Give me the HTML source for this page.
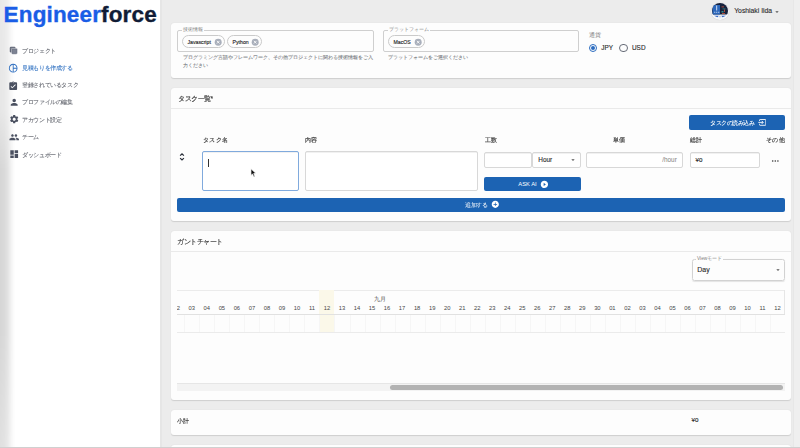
<!DOCTYPE html>
<html><head><meta charset="utf-8">
<style>
*{box-sizing:border-box;margin:0;padding:0}
html,body{width:800px;height:448px;overflow:hidden}
body{position:relative;background:#ececec;font-family:"Liberation Sans",sans-serif;color:#333}
.a{position:absolute}
.t{position:absolute;white-space:nowrap;line-height:1}
#side{left:0;top:0;width:160px;height:448px;background:#fff}
#shade{left:0;top:0;width:18px;height:448px;background:linear-gradient(to right,rgba(0,0,0,.16) 0,rgba(0,0,0,.145) 4.5px,rgba(0,0,0,.11) 8px,rgba(0,0,0,.05) 11px,rgba(0,0,0,.016) 13.5px,rgba(0,0,0,0) 15.5px);-webkit-mask-image:linear-gradient(to bottom,rgba(0,0,0,.55) 0,rgba(0,0,0,.6) 110px,#000 170px,#000 330px,rgba(0,0,0,.75) 448px)}
#sideline{left:160px;top:0;width:1.6px;height:448px;background:#e6e6e6}
.logo{left:3.6px;top:3.5px;font-size:22.5px;font-weight:bold;letter-spacing:0.15px;-webkit-text-stroke:0.35px currentColor}
.mi{position:absolute;left:0;width:160px;height:17px}
.mi svg{position:absolute;left:8.7px;top:3.4px;width:10.4px;height:10.4px;fill:#4a5060}
.mi span{position:absolute;left:22px;top:5.7px;font-size:6px;transform:scale(0.94);transform-origin:0 0;color:#6a6d75;-webkit-text-stroke:0.1px #6a6d75;white-space:nowrap;line-height:1}
.card{position:absolute;left:171px;width:620px;background:#fdfdfd;border-radius:3px;box-shadow:0 0.5px 1.1px rgba(0,0,0,.13)}
.fld{position:absolute;border:1px solid #cfcfcf;border-radius:2px}
.lbl{position:absolute;font-size:4.5px;color:#7e7e7e;background:#fdfdfd;padding:0 1px;line-height:1;white-space:nowrap}
.chip{position:absolute;height:13px;border:0.8px solid #cacaca;border-radius:7px;font-size:5px;color:#333;line-height:11.5px}
.help{position:absolute;font-size:5px;color:#777a80;-webkit-text-stroke:0.08px #777a80;line-height:8px;white-space:nowrap}
.inp{position:absolute;border:0.8px solid #d8d8d8;box-shadow:inset 0 0.4px 0 #e4e4e4;border-radius:2px;background:#fff}
.btn{position:absolute;background:#1c63b3;border-radius:2px;color:#fff}
.hdr{position:absolute;font-size:7px;transform:scale(0.92);transform-origin:0 0;-webkit-text-stroke:0.2px #474747;color:#474747;white-space:nowrap;line-height:1}
.day{position:absolute;top:305px;width:15.05px;text-align:center;font-size:5.8px;color:#474747;line-height:1}
</style></head><body>
<div id="side" class="a"></div><div id="shade" class="a"></div>
<div id="sideline" class="a"></div>
<div class="a" style="left:793px;top:0;width:7px;height:448px;background:#efefef;border-left:0.6px solid #e7e7e7"></div>
<div class="t logo"><span style="color:#1a5de6;-webkit-text-stroke:0.35px #1a5de6">Engineer</span><span style="color:#111c36;-webkit-text-stroke:0.35px #111c36">force</span></div>

<!-- menu -->
<div class="mi" style="top:41.9px"><svg viewBox="0 0 10 10" style="left:9px;top:4.4px;width:9.6px;height:9.6px"><rect x="0.8" y="0.9" width="6" height="6" rx="1.2" fill="#5e6474"/><rect x="1.6" y="1.7" width="1" height="1" fill="#9aa0ad"/><rect x="2.5" y="2.4" width="6.3" height="6.2" rx="1.2" fill="#6f7585" stroke="#f4f4f6" stroke-width="0.5"/><rect x="3.6" y="3.6" width="4" height="3.8" rx="0.4" fill="#7d8393"/></svg><span>プロジェクト</span></div>
<div class="mi" style="top:59.4px"><svg viewBox="0 0 24 24" style="fill:#2f6fc0;left:8.1px"><path d="M12 2C6.480 2 2 6.48 2 12s4.48 10 10 10 10-4.48 10-10S17.52 2 12 2zm1 2.07c3.61.45 6.48 3.33 6.93 6.93H13V4.070zM4 12c0-4.06 3.07-7.44 7-7.93v15.87c-3.93-.5-7-3.88-7-7.94zm9 7.93V13h6.93c-.45 3.61-3.32 6.48-6.93 6.93z"/></svg><span style="color:#3a78c4;-webkit-text-stroke:0.1px #3a78c4">見積もりを作成する</span></div>
<div class="mi" style="top:76.7px"><svg viewBox="0 0 24 24" style="left:8.2px;top:4.2px"><path d="M19 3h-4.18C14.4 1.84 13.3 1 12 1c-1.3 0-2.4.84-2.82 2H5c-1.1 0-2 .9-2 2v14c0 1.1.9 2 2 2h14c1.1 0 2-.9 2-2V5c0-1.1-.9-2-2-2zm-7 0c.55 0 1 .45 1 1s-.45 1-1 1-1-.45-1-1 .45-1 1-1zm-2 14l-4-4 1.41-1.41L10 14.17l6.59-6.590L18 9l-8 8z"/></svg><span>登録されているタスク</span></div>
<div class="mi" style="top:93.8px"><svg viewBox="0 0 24 24"><path d="M12 12c2.21 0 4-1.79 4-4s-1.79-4-4-4-4 1.79-4 4 1.79 4 4 4zm0 2c-2.67 0-8 1.34-8 4v2h16v-2c0-2.66-5.33-4-8-4z"/></svg><span>プロファイルの編集</span></div>
<div class="mi" style="top:111.1px"><svg viewBox="0 0 24 24"><path d="M19.14 12.94c.04-.3.06-.61.06-.94 0-.32-.02-.64-.07-.94l2.030-1.58c.18-.14.23-.41.12-.61l-1.92-3.32c-.12-.22-.37-.29-.59-.22l-2.39.96c-.5-.38-1.03-.7-1.62-.94l-.36-2.54c-.04-.24-.24-.41-.48-.41h-3.84c-.24 0-.43.17-.47.41l-.36 2.54c-.59.24-1.13.57-1.62.94l-2.39-.96c-.22-.08-.47 0-.59.22L2.74 8.87c-.12.21-.08.47.12.61l2.03 1.58c-.05.3-.09.63-.09.94s.02.64.07.94l-2.03 1.58c-.18.14-.23.41-.12.61l1.92 3.32c.12.22.37.29.59.22l2.39-.96c.5.38 1.03.7 1.62.94l.36 2.54c.05.24.24.41.48.41h3.84c.24 0 .44-.17.47-.41l.36-2.54c.59-.24 1.13-.56 1.62-.94l2.39.96c.22.08.47 0 .59-.22l1.92-3.32c.12-.22.07-.47-.12-.61l-2.01-1.58zM12 15.6c-1.98 0-3.6-1.62-3.6-3.6s1.62-3.6 3.6-3.6 3.6 1.62 3.6 3.6-1.62 3.6-3.6 3.6z"/></svg><span>アカウント設定</span></div>
<div class="mi" style="top:128.5px"><svg viewBox="0 0 24 24"><path d="M16 11c1.66 0 2.99-1.34 2.99-3S17.66 5 16 5c-1.66 0-3 1.34-3 3s1.34 3 3 3zm-8 0c1.66 0 2.99-1.34 2.99-3S9.66 5 8 5C6.34 5 5 6.34 5 8s1.34 3 3 3zm0 2c-2.33 0-7 1.17-7 3.5V19h14v-2.5c0-2.33-4.67-3.5-7-3.5zm8 0c-.29 0-.62.02-.97.05 1.16.84 1.97 1.97 1.97 3.45V19h6v-2.5c0-2.33-4.67-3.5-7-3.5z"/></svg><span>チーム</span></div>
<div class="mi" style="top:145.9px"><svg viewBox="0 0 24 24"><path d="M3 13h8V3H3v10zm0 8h8v-6H3v6zm10 0h8V11h-8v10zm0-18v6h8V3h-8z"/></svg><span>ダッシュボード</span></div>

<!-- top bar user -->
<div class="a" style="left:711.3px;top:2.6px;width:17.6px;height:17.6px;border-radius:50%;background:#f7f8fa;box-shadow:0 0 0.7px rgba(0,0,0,.25)"></div>
<svg class="a" style="left:712.1px;top:3.4px;width:16px;height:16px" viewBox="0 0 32 32">
<defs><clipPath id="av"><circle cx="16" cy="16" r="16"/></clipPath></defs>
<g clip-path="url(#av)">
<rect x="0" y="0" width="32" height="32" fill="#f3f5f9"/>
<rect x="0" y="0" width="32" height="23" fill="#17213b"/>
<rect x="1" y="4" width="15" height="19" fill="#2b66ba"/>
<rect x="8.5" y="5" width="1.8" height="10" fill="#dfe8f6"/>
<rect x="4.5" y="17.5" width="2" height="2" fill="#dfe8f6"/>
<rect x="8.5" y="17.5" width="2" height="2" fill="#dfe8f6"/>
<rect x="12.5" y="17.5" width="2" height="2" fill="#dfe8f6"/>
<rect x="19" y="7" width="5" height="1.6" fill="#d0573c"/>
<rect x="21" y="11" width="6" height="1.6" fill="#2f8a8c"/>
<rect x="24" y="13" width="1.6" height="5" fill="#d0573c"/>
<rect x="19" y="16" width="4" height="3" fill="#2f8a8c"/>
<rect x="20" y="20" width="6" height="1.6" fill="#d0573c"/>
<path d="M4 25.5H13.5L11 28.5Z M18.5 25.5H28L21 28.5Z" fill="#2a62c6"/>
<rect x="14" y="25.5" width="4" height="3" fill="#c9d2de"/>
</g></svg>
<div class="t" style="left:734.2px;top:8.2px;font-size:6.8px;color:#2e2e2e;-webkit-text-stroke:0.12px #2e2e2e">Yoshiaki Iida</div>
<svg class="a" style="left:773.2px;top:7.5px;width:8px;height:8px" viewBox="0 0 24 24"><path d="M7 10l5 5 5-5z" fill="#555"/></svg>

<!-- card 1 -->
<div class="card" style="top:22.5px;height:55.5px"></div>
<div class="fld" style="left:177px;top:30px;width:197px;height:22.3px"></div>
<div class="lbl" style="left:182px;top:28.3px">技術情報</div>
<div class="chip" style="left:182px;top:34.8px;width:42.5px"><span class="t" style="left:4.5px;top:3.8px;font-size:5.2px;color:#222;-webkit-text-stroke:0.12px #222">Javascript</span><svg class="a" style="left:30.9px;top:2.1px;width:8.4px;height:8.4px" viewBox="0 0 24 24"><circle cx="12" cy="12" r="10" fill="#a9afbb"/><path d="M8.3 8.3L15.7 15.7M15.7 8.3L8.3 15.7" stroke="#fff" stroke-width="2.4"/></svg></div>
<div class="chip" style="left:227px;top:34.8px;width:35px"><span class="t" style="left:4.5px;top:3.8px;font-size:5.2px;color:#222;-webkit-text-stroke:0.12px #222">Python</span><svg class="a" style="left:23.4px;top:2.1px;width:8.4px;height:8.4px" viewBox="0 0 24 24"><circle cx="12" cy="12" r="10" fill="#a9afbb"/><path d="M8.3 8.3L15.7 15.7M15.7 8.3L8.3 15.7" stroke="#fff" stroke-width="2.4"/></svg></div>
<div class="help" style="left:183px;top:53px">プログラミング言語やフレームワーク、その他プロジェクトに関わる技術情報をご入<br>力ください</div>

<div class="fld" style="left:383px;top:30px;width:196px;height:22.3px"></div>
<div class="lbl" style="left:388px;top:28.3px">プラットフォーム</div>
<div class="chip" style="left:388px;top:34.8px;width:37px"><span class="t" style="left:4.5px;top:3.8px;font-size:5.2px;color:#222;-webkit-text-stroke:0.12px #222">MacOS</span><svg class="a" style="left:25.4px;top:2.1px;width:8.4px;height:8.4px" viewBox="0 0 24 24"><circle cx="12" cy="12" r="10" fill="#a9afbb"/><path d="M8.3 8.3L15.7 15.7M15.7 8.3L8.3 15.7" stroke="#fff" stroke-width="2.4"/></svg></div>
<div class="help" style="left:388.3px;top:53px">プラットフォームをご選択ください</div>

<div class="t" style="left:588.5px;top:32px;font-size:6px;color:#888">通貨</div>
<div class="a" style="left:588.5px;top:43.5px;width:8.5px;height:8.5px;border-radius:50%;border:1px solid #2b6cc0"></div>
<div class="a" style="left:590.75px;top:45.75px;width:4px;height:4px;border-radius:50%;background:#2b6cc0"></div>
<div class="t" style="left:601.2px;top:44.5px;font-size:6.4px;color:#2a2a2a;-webkit-text-stroke:0.12px #2a2a2a">JPY</div>
<div class="a" style="left:619px;top:43.5px;width:8.5px;height:8.5px;border-radius:50%;border:0.9px solid #676c78"></div>
<div class="t" style="left:632px;top:44.5px;font-size:6.4px;color:#2a2a2a;-webkit-text-stroke:0.12px #2a2a2a">USD</div>

<!-- card 2 -->
<div class="card" style="top:88px;height:133px"></div>
<div class="t" style="left:177.5px;top:94.5px;font-size:7px;transform:scale(0.93);transform-origin:0 0;color:#3a3a3a;-webkit-text-stroke:0.15px #3a3a3a">タスク一覧*</div>
<div class="a" style="left:171px;top:108px;width:620px;height:1px;background:#eaeaea"></div>
<div class="btn" style="left:689.3px;top:115.3px;width:95.7px;height:14.5px"><span class="t" style="left:20.3px;top:4.4px;font-size:6px;transform:scale(0.93);transform-origin:0 0;color:#fff;-webkit-text-stroke:0.1px #fff">タスクの読み込み</span><svg class="a" style="left:68.8px;top:4px;width:8.4px;height:6.8px" viewBox="0 0 17 14"><path d="M3 4.2V2.2Q3 1 4.2 1H15Q16 1 16 2.2V11.8Q16 13 15 13H4.2Q3 13 3 11.8V9.8" fill="none" stroke="#fff" stroke-width="1.8"/><path d="M0.5 7H10.5M7.5 3.8L10.7 7L7.5 10.2" fill="none" stroke="#fff" stroke-width="1.8"/></svg></div>

<div class="hdr" style="left:203px;top:136.1px">タスク名</div>
<div class="hdr" style="left:305px;top:136.1px">内容</div>
<div class="hdr" style="left:484.5px;top:136.1px">工数</div>
<div class="hdr" style="left:612.5px;top:136.1px">単価</div>
<div class="hdr" style="left:689.5px;top:136.1px">総計</div>
<div class="hdr" style="left:766px;top:136.1px">その他</div>

<svg class="a" style="left:177px;top:151.5px;width:10px;height:10px" viewBox="0 0 24 24"><path fill="none" stroke="#2a2f3a" stroke-width="3" d="M7.5 8.8L12 4.6L16.5 8.8M7.5 14.6L12 18.8L16.5 14.6"/></svg>
<div class="inp" style="left:202.3px;top:151.1px;width:96.5px;height:40.2px;border:1px solid #80aadd"></div>
<div class="a" style="left:208.3px;top:159px;width:0.8px;height:7.5px;background:#333"></div>
<svg class="a" style="left:250px;top:168px;width:8.4px;height:10.8px" viewBox="0 0 7 9"><path d="M0.8 0.6 L0.8 6.2 L2.1 5 L3.2 7.5 L4.2 7.1 L3.1 4.6 L5 4.6 Z" fill="#111" stroke="#fff" stroke-width="0.6" stroke-linejoin="round"/></svg>
<div class="inp" style="left:305px;top:151.4px;width:172.5px;height:39.9px"></div>
<div class="inp" style="left:484.3px;top:151.5px;width:47.5px;height:16px"></div>
<div class="inp" style="left:532.3px;top:151.5px;width:48.5px;height:16px"><span class="t" style="left:5px;top:4.7px;font-size:6.4px;color:#2a2a2a;-webkit-text-stroke:0.12px #2a2a2a">Hour</span></div>
<svg class="a" style="left:568.5px;top:155.5px;width:8px;height:8px" viewBox="0 0 24 24"><path d="M7 10l5 5 5-5z" fill="#555"/></svg>
<div class="inp" style="left:586.3px;top:151.5px;width:96.5px;height:16px"><span class="t" style="right:5px;top:4.6px;font-size:6.4px;color:#808080">/hour</span></div>
<div class="inp" style="left:689.5px;top:151.5px;width:70px;height:16px"><span class="t" style="left:5px;top:4.7px;font-size:6.2px;color:#222;-webkit-text-stroke:0.15px #222">¥0</span></div>
<svg class="a" style="left:770px;top:158px;width:10px;height:6px" viewBox="0 0 10 6"><circle cx="2.7" cy="3" r="0.8" fill="#333"/><circle cx="5.3" cy="3" r="0.8" fill="#333"/><circle cx="7.9" cy="3" r="0.8" fill="#333"/></svg>
<div class="btn" style="left:484.3px;top:177.2px;width:96.3px;height:14px"><span class="t" style="left:34px;top:4.8px;font-size:5.8px;color:#fff">ASK AI</span><svg class="a" style="left:55.3px;top:2.8px;width:8.8px;height:8.8px" viewBox="0 0 24 24"><path fill="#fff" d="M12 2C6.48 2 2 6.48 2 12s4.48 10 10 10 10-4.48 10-10S17.52 2 12 2zm-2 14.5v-9l6 4.5-6 4.5z"/></svg></div>
<div class="btn" style="left:177px;top:197.5px;width:608px;height:14.2px"><span class="t" style="left:288px;top:4.2px;font-size:6px;transform:scale(0.92);transform-origin:0 0;color:#fff">追加する</span><svg class="a" style="left:313.7px;top:2.9px;width:8.6px;height:8.6px" viewBox="0 0 24 24"><path fill="#fff" d="M12 2C6.48 2 2 6.48 2 12s4.48 10 10 10 10-4.48 10-10S17.52 2 12 2zm5 11h-4v4h-2v-4H7v-2h4V7h2v4h4v2z"/></svg></div>

<!-- card 3 gantt -->
<div class="card" style="top:230.5px;height:169.5px"></div>
<div class="t" style="left:177.3px;top:238px;font-size:7px;transform:scale(0.93);transform-origin:0 0;color:#3a3a3a;-webkit-text-stroke:0.15px #3a3a3a">ガントチャート</div>
<div class="a" style="left:171px;top:250.5px;width:620px;height:1px;background:#eaeaea"></div>
<div class="a" style="left:692px;top:259px;width:92.5px;height:21.8px;border:0.8px solid #d2d2d2;border-radius:2.5px;box-shadow:0 0.6px 1px rgba(0,0,0,.1)"></div>
<div class="lbl" style="left:696px;top:256.8px;font-size:4.8px">Viewモード</div>
<div class="t" style="left:697.2px;top:266px;font-size:7px;color:#2a2a2a;-webkit-text-stroke:0.12px #2a2a2a">Day</div>
<svg class="a" style="left:773.5px;top:265.7px;width:8px;height:8px" viewBox="0 0 24 24"><path d="M7 10l5 5 5-5z" fill="#555"/></svg>

<!--G--><div id="gantt" class="a" style="left:177px;top:290px;width:608px;height:110px;overflow:hidden">
<div class="a" style="left:0;top:0;width:608px;height:0.8px;background:#ebebeb"></div>
<div class="a" style="left:142.47px;top:0;width:15.02px;height:42.2px;background:#fbf8e9"></div>
<div class="t" style="left:196.5px;top:6.8px;font-size:5.5px;color:#4a4a4a">九月</div>
<div class="day" style="left:-7.73px;top:16.3px">02</div>
<div class="day" style="left:7.29px;top:16.3px">03</div>
<div class="day" style="left:22.31px;top:16.3px">04</div>
<div class="day" style="left:37.33px;top:16.3px">05</div>
<div class="day" style="left:52.35px;top:16.3px">06</div>
<div class="day" style="left:67.37px;top:16.3px">07</div>
<div class="day" style="left:82.39px;top:16.3px">08</div>
<div class="day" style="left:97.41px;top:16.3px">09</div>
<div class="day" style="left:112.43px;top:16.3px">10</div>
<div class="day" style="left:127.45px;top:16.3px">11</div>
<div class="day" style="left:142.47px;top:16.3px">12</div>
<div class="day" style="left:157.49px;top:16.3px">13</div>
<div class="day" style="left:172.51px;top:16.3px">14</div>
<div class="day" style="left:187.53px;top:16.3px">15</div>
<div class="day" style="left:202.55px;top:16.3px">16</div>
<div class="day" style="left:217.57px;top:16.3px">17</div>
<div class="day" style="left:232.59px;top:16.3px">18</div>
<div class="day" style="left:247.61px;top:16.3px">19</div>
<div class="day" style="left:262.63px;top:16.3px">20</div>
<div class="day" style="left:277.65px;top:16.3px">21</div>
<div class="day" style="left:292.67px;top:16.3px">22</div>
<div class="day" style="left:307.69px;top:16.3px">23</div>
<div class="day" style="left:322.71px;top:16.3px">24</div>
<div class="day" style="left:337.73px;top:16.3px">25</div>
<div class="day" style="left:352.75px;top:16.3px">26</div>
<div class="day" style="left:367.77px;top:16.3px">27</div>
<div class="day" style="left:382.79px;top:16.3px">28</div>
<div class="day" style="left:397.81px;top:16.3px">29</div>
<div class="day" style="left:412.83px;top:16.3px">30</div>
<div class="day" style="left:427.85px;top:16.3px">01</div>
<div class="day" style="left:442.87px;top:16.3px">02</div>
<div class="day" style="left:457.89px;top:16.3px">03</div>
<div class="day" style="left:472.91px;top:16.3px">04</div>
<div class="day" style="left:487.93px;top:16.3px">05</div>
<div class="day" style="left:502.95px;top:16.3px">06</div>
<div class="day" style="left:517.97px;top:16.3px">07</div>
<div class="day" style="left:532.99px;top:16.3px">08</div>
<div class="day" style="left:548.01px;top:16.3px">09</div>
<div class="day" style="left:563.03px;top:16.3px">10</div>
<div class="day" style="left:578.05px;top:16.3px">11</div>
<div class="day" style="left:593.07px;top:16.3px">12</div>
<div class="a" style="left:607.2px;top:0;width:0.8px;height:24px;background:#e6e6e6"></div>
<div class="a" style="left:0;top:23.6px;width:608px;height:0.9px;background:#e1e1e1"></div>
<div class="a" style="left:7.29px;top:24.5px;width:0.6px;height:17.7px;background:#f6f6f6"></div>
<div class="a" style="left:22.31px;top:24.5px;width:0.6px;height:17.7px;background:#f6f6f6"></div>
<div class="a" style="left:37.33px;top:24.5px;width:0.6px;height:17.7px;background:#f6f6f6"></div>
<div class="a" style="left:52.35px;top:24.5px;width:0.6px;height:17.7px;background:#f6f6f6"></div>
<div class="a" style="left:67.37px;top:24.5px;width:0.6px;height:17.7px;background:#f6f6f6"></div>
<div class="a" style="left:82.39px;top:24.5px;width:0.6px;height:17.7px;background:#f6f6f6"></div>
<div class="a" style="left:97.41px;top:24.5px;width:0.6px;height:17.7px;background:#f6f6f6"></div>
<div class="a" style="left:112.43px;top:24.5px;width:0.6px;height:17.7px;background:#f6f6f6"></div>
<div class="a" style="left:127.45px;top:24.5px;width:0.6px;height:17.7px;background:#f6f6f6"></div>
<div class="a" style="left:142.47px;top:24.5px;width:0.6px;height:17.7px;background:#f6f6f6"></div>
<div class="a" style="left:157.49px;top:24.5px;width:0.6px;height:17.7px;background:#f6f6f6"></div>
<div class="a" style="left:172.51px;top:24.5px;width:0.6px;height:17.7px;background:#f6f6f6"></div>
<div class="a" style="left:187.53px;top:24.5px;width:0.6px;height:17.7px;background:#f6f6f6"></div>
<div class="a" style="left:202.55px;top:24.5px;width:0.6px;height:17.7px;background:#f6f6f6"></div>
<div class="a" style="left:217.57px;top:24.5px;width:0.6px;height:17.7px;background:#f6f6f6"></div>
<div class="a" style="left:232.59px;top:24.5px;width:0.6px;height:17.7px;background:#f6f6f6"></div>
<div class="a" style="left:247.61px;top:24.5px;width:0.6px;height:17.7px;background:#f6f6f6"></div>
<div class="a" style="left:262.63px;top:24.5px;width:0.6px;height:17.7px;background:#f6f6f6"></div>
<div class="a" style="left:277.65px;top:24.5px;width:0.6px;height:17.7px;background:#f6f6f6"></div>
<div class="a" style="left:292.67px;top:24.5px;width:0.6px;height:17.7px;background:#f6f6f6"></div>
<div class="a" style="left:307.69px;top:24.5px;width:0.6px;height:17.7px;background:#f6f6f6"></div>
<div class="a" style="left:322.71px;top:24.5px;width:0.6px;height:17.7px;background:#f6f6f6"></div>
<div class="a" style="left:337.73px;top:24.5px;width:0.6px;height:17.7px;background:#f6f6f6"></div>
<div class="a" style="left:352.75px;top:24.5px;width:0.6px;height:17.7px;background:#f6f6f6"></div>
<div class="a" style="left:367.77px;top:24.5px;width:0.6px;height:17.7px;background:#f6f6f6"></div>
<div class="a" style="left:382.79px;top:24.5px;width:0.6px;height:17.7px;background:#f6f6f6"></div>
<div class="a" style="left:397.81px;top:24.5px;width:0.6px;height:17.7px;background:#f6f6f6"></div>
<div class="a" style="left:412.83px;top:24.5px;width:0.6px;height:17.7px;background:#f6f6f6"></div>
<div class="a" style="left:427.85px;top:24.5px;width:0.6px;height:17.7px;background:#f6f6f6"></div>
<div class="a" style="left:442.87px;top:24.5px;width:0.6px;height:17.7px;background:#f6f6f6"></div>
<div class="a" style="left:457.89px;top:24.5px;width:0.6px;height:17.7px;background:#f6f6f6"></div>
<div class="a" style="left:472.91px;top:24.5px;width:0.6px;height:17.7px;background:#f6f6f6"></div>
<div class="a" style="left:487.93px;top:24.5px;width:0.6px;height:17.7px;background:#f6f6f6"></div>
<div class="a" style="left:502.95px;top:24.5px;width:0.6px;height:17.7px;background:#f6f6f6"></div>
<div class="a" style="left:517.97px;top:24.5px;width:0.6px;height:17.7px;background:#f6f6f6"></div>
<div class="a" style="left:532.99px;top:24.5px;width:0.6px;height:17.7px;background:#f6f6f6"></div>
<div class="a" style="left:548.01px;top:24.5px;width:0.6px;height:17.7px;background:#f6f6f6"></div>
<div class="a" style="left:563.03px;top:24.5px;width:0.6px;height:17.7px;background:#f6f6f6"></div>
<div class="a" style="left:578.05px;top:24.5px;width:0.6px;height:17.7px;background:#f6f6f6"></div>
<div class="a" style="left:593.07px;top:24.5px;width:0.6px;height:17.7px;background:#f6f6f6"></div>
<div class="a" style="left:0;top:41.8px;width:608px;height:0.8px;background:#ebebeb"></div>
<div class="a" style="left:0;top:93px;width:608px;height:8px;background:#f3f3f3;border-top:0.6px solid #e6e6e6"></div>
<div class="a" style="left:212.5px;top:95.3px;width:393px;height:4.8px;border-radius:3px;background:#b3b3b3"></div>
</div><!--/G-->

<!-- card 4 -->
<div class="card" style="top:410px;height:24.8px"></div>
<div class="t" style="left:177px;top:418px;font-size:6px;transform:scale(1.04);transform-origin:0 0;color:#3a3a3a;-webkit-text-stroke:0.15px #3a3a3a">小計</div>
<div class="t" style="left:691.5px;top:417.3px;font-size:6.2px;color:#222;-webkit-text-stroke:0.15px #222">¥0</div>
<div class="card" style="top:444.8px;height:10px"></div>
<div class="a" style="left:0;top:446.8px;width:800px;height:1.2px;background:#d0d0d0"></div>
</body></html>
